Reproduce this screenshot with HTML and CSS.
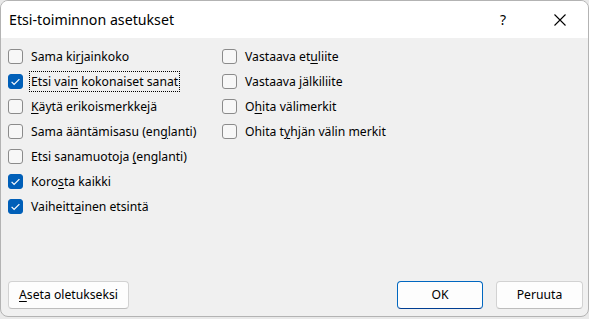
FILE: index.html
```html
<!DOCTYPE html>
<html lang="fi">
<head>
<meta charset="utf-8">
<title>Etsi-toiminnon asetukset</title>
<link rel="stylesheet" href="styles.css">
</head>
<body>
<div class="dialog">
  <div class="titlebar">
    <div class="title">Etsi-toiminnon asetukset</div>
    <div class="tb-buttons">
      <span class="help">?</span>
      <span class="close"><svg width="12" height="12" viewBox="0 0 12 12"><path d="M0.5 0.5 L11.5 11.5 M11.5 0.5 L0.5 11.5" stroke="#000" stroke-width="1.1" fill="none"/></svg></span>
    </div>
  </div>
  <div class="content">
    <div class="col col-left">
      <div class="row"><span class="box"></span><span class="label">Sama ki<u>r</u>jainkoko</span></div>
      <div class="row"><span class="box checked"><svg width="15" height="15" viewBox="0 0 15 15"><path d="M3.6 7.9 L6.1 10.4 L11.4 5.1" stroke="#fff" stroke-width="1.2" fill="none"/></svg></span><span class="label focus">Etsi vai<u>n</u> kokonaiset sanat</span></div>
      <div class="row"><span class="box"></span><span class="label"><u>K</u>äytä erikoismerkkejä</span></div>
      <div class="row"><span class="box"></span><span class="label">Sama ääntämisasu (en<u>g</u>lanti)</span></div>
      <div class="row"><span class="box"></span><span class="label">Etsi sanamuotoja <u>(</u>englanti)</span></div>
      <div class="row"><span class="box checked"><svg width="15" height="15" viewBox="0 0 15 15"><path d="M3.6 7.9 L6.1 10.4 L11.4 5.1" stroke="#fff" stroke-width="1.2" fill="none"/></svg></span><span class="label">Koro<u>s</u>ta kaikki</span></div>
      <div class="row"><span class="box checked"><svg width="15" height="15" viewBox="0 0 15 15"><path d="M3.6 7.9 L6.1 10.4 L11.4 5.1" stroke="#fff" stroke-width="1.2" fill="none"/></svg></span><span class="label">Vaiheitt<u>a</u>inen etsintä</span></div>
    </div>
    <div class="col col-right">
      <div class="row"><span class="box"></span><span class="label">Vastaava et<u>u</u>liite</span></div>
      <div class="row"><span class="box"></span><span class="label">Vastaava <u>j</u>älkiliite</span></div>
      <div class="row"><span class="box"></span><span class="label">O<u>h</u>ita välimerkit</span></div>
      <div class="row"><span class="box"></span><span class="label">Ohita t<u>y</u>hjän välin merkit</span></div>
    </div>
  </div>
  <div class="footer">
    <button class="btn btn-reset"><u>A</u>seta oletukseksi</button>
    <div class="footer-right">
      <button class="btn btn-ok">OK</button>
      <button class="btn btn-cancel">Peruuta</button>
    </div>
  </div>
</div>
</body>
</html>
```
FILE: styles.css
```css
html, body {
  margin: 0;
  padding: 0;
}
body {
  background: #e9e9e9;
  font-family: "Noto Sans", "Open Sans", sans-serif;
  color: #000;
  width: 589px;
  height: 319px;
  overflow: hidden;
}
.dialog {
  box-sizing: border-box;
  width: 589px;
  height: 317px;
  border: 1px solid #b3b3b3;
  border-radius: 8px;
  background: #f0f0f0;
  overflow: hidden;
  display: flex;
  flex-direction: column;
}
.titlebar {
  height: 37px;
  background: #ffffff;
  display: flex;
  align-items: center;
  justify-content: space-between;
  flex-shrink: 0;
}
.title {
  font-size: 14.2px;
  padding-left: 8px;
  padding-bottom: 1px;
}
.tb-buttons {
  display: flex;
  align-items: center;
  padding-right: 22px;
}
.help {
  font-size: 14px;
  margin-right: 48px;
  padding-bottom: 1px;
}
.close {
  display: flex;
  width: 12px;
  height: 12px;
}
.content {
  flex: 1;
  display: flex;
  padding: 6px 0 0 7px;
}
.col-left {
  width: 214px;
}
.row {
  height: 25px;
  display: flex;
  align-items: center;
  font-size: 12.2px;
}
.box {
  box-sizing: border-box;
  width: 15px;
  height: 15px;
  border: 1px solid #8b8b8b;
  border-radius: 3px;
  background: #f7f7f7;
  margin-right: 6px;
  flex-shrink: 0;
  display: flex;
  align-items: center;
  justify-content: center;
}
.box.checked {
  background: #005fb8;
  border-color: #005fb8;
}
.box.checked svg {
  margin: -1px;
}
.label {
  padding: 1px 1px 1px;
  border: 1px dotted transparent;
  white-space: nowrap;
}
.label.focus {
  border-color: #000;
}
u {
  text-decoration-thickness: 1px;
  text-underline-offset: 2px;
}
.footer {
  display: flex;
  justify-content: space-between;
  padding: 0 5px 7px 7px;
}
.footer-right {
  display: flex;
  gap: 13px;
}
.btn {
  box-sizing: border-box;
  height: 28px;
  font-family: "Noto Sans", "Open Sans", sans-serif;
  font-size: 12.2px;
  color: #000;
  background: #fdfdfd;
  border: 1px solid #d2d2d2;
  border-bottom-color: #bdbdbd;
  border-radius: 4px;
  padding: 0 0 1px;
}
.btn-reset {
  width: 121px;
}
.btn-ok {
  width: 86px;
  border-color: #0067c0;
  border-bottom-color: #003e92;
}
.btn-cancel {
  width: 87px;
}
```
